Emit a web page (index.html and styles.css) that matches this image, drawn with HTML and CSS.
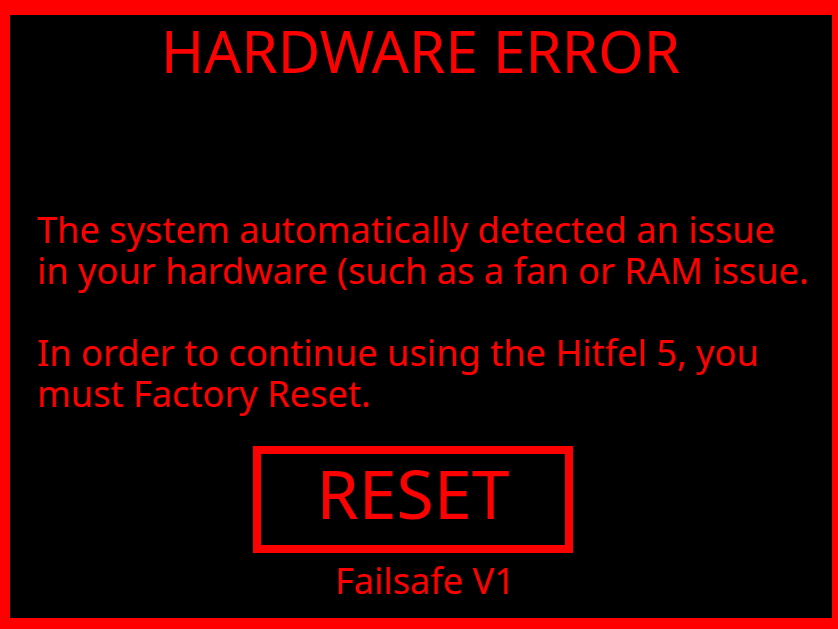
FILE: index.html
```html
<!DOCTYPE html>
<html>
<head>
<meta charset="utf-8">
<link rel="stylesheet" href="styles.css">
</head>
<body>
<div class="screen">
  <h1 class="title">HARDWARE ERROR</h1>
  <div class="message">
    <p>The system automatically detected an issue<br>in your hardware (such as a fan or RAM issue.</p>
    <p>In order to continue using the Hitfel 5, you<br>must Factory Reset.</p>
  </div>
  <div class="actions">
    <div class="reset">RESET</div>
    <div class="version">Failsafe V1</div>
  </div>
</div>
</body>
</html>
```

FILE: styles.css
```css
html, body {
  margin: 0;
  padding: 0;
  background: #ff0000;
  height: 100%;
  overflow: hidden;
}
.screen {
  box-sizing: border-box;
  margin: 15px 6px 0 10px;
  height: 603px;
  background: #000;
  color: #ff0000;
  font-family: "Noto Sans", "Open Sans", sans-serif;
  display: flex;
  flex-direction: column;
}
.title {
  margin: 0 1px 0 0;
  font-weight: 400;
  font-size: 58.4px;
  line-height: 72px;
  text-align: center;
  white-space: nowrap;
}
.message {
  margin: 122px 0 0 27px;
  font-size: 36.2px;
  line-height: 41px;
  white-space: nowrap;
}
.message p {
  margin: 0;
}
.message p + p {
  margin-top: 41px;
}
.actions {
  display: flex;
  flex-direction: column;
  align-items: center;
  margin-top: 32px;
}
.reset {
  box-sizing: border-box;
  border: 8px solid #ff0000;
  width: 320px;
  height: 107px;
  margin-right: 16px;
  font-size: 68px;
  line-height: 77px;
  padding-bottom: 14px;
  text-align: center;
  cursor: pointer;
}
.version {
  font-size: 36.2px;
  line-height: 41px;
  margin: 7px 0 0 8px;
}
```
